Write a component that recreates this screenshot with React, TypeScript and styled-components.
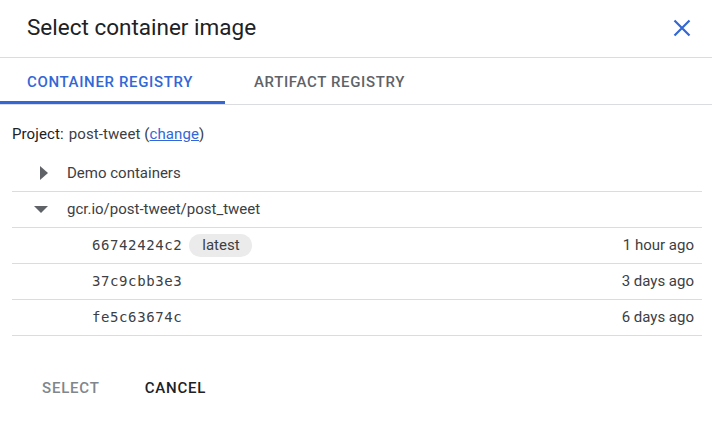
import React from "react";
import styled, { createGlobalStyle } from "styled-components";

const Global = createGlobalStyle`
  html, body { margin: 0; padding: 0; background: #fff; }
  body { font-family: Roboto, "Noto Sans", Arial, sans-serif; color: #202124; }
`;

const Dialog = styled.div`
  width: 712px;
  height: 433px;
  background: #fff;
  display: flex;
  flex-direction: column;
`;

const Header = styled.div`
  height: 58px;
  box-sizing: border-box;
  border-bottom: 1px solid #dadce0;
  display: flex;
  align-items: center;
  justify-content: space-between;
  padding: 0 16px 0 27px;
`;

const Title = styled.h1`
  margin: 0;
  font-size: 22.5px;
  font-weight: 400;
  color: #202124;
  padding-bottom: 4px;
`;

const CloseButton = styled.button`
  border: none;
  background: none;
  padding: 0;
  width: 28px;
  height: 28px;
  display: flex;
  align-items: center;
  justify-content: center;
  cursor: pointer;
  margin-top: -2px;
`;

const Tabs = styled.div`
  height: 47px;
  box-sizing: border-box;
  border-bottom: 1px solid #dadce0;
  display: flex;
`;

const Tab = styled.div<{ $active?: boolean; $width: number; $pad: number }>`
  width: ${(p) => p.$width}px;
  box-sizing: border-box;
  display: flex;
  align-items: center;
  padding-left: ${(p) => p.$pad}px;
  font-size: 15px;
  font-weight: 500;
  letter-spacing: 0.65px;
  text-transform: uppercase;
  color: ${(p) => (p.$active ? "#3367d6" : "#5f6368")};
  border-bottom: 3px solid ${(p) => (p.$active ? "#3367d6" : "transparent")};
  padding-top: 4px;
`;

const Content = styled.div`
  padding: 0 10px 0 12px;
`;

const ProjectLine = styled.div`
  height: 51px;
  display: flex;
  align-items: center;
  font-size: 15px;
  letter-spacing: 0.1px;
  color: #3c4043;
  padding-top: 6px;
  box-sizing: border-box;
`;

const Label = styled.span`
  color: #202124;
  margin-right: 5px;
`;

const Link = styled.a`
  color: #3367d6;
  text-decoration: underline;
`;

const List = styled.div``;

const Row = styled.div<{ $indent: number }>`
  height: 36px;
  box-sizing: border-box;
  display: flex;
  align-items: center;
  padding-left: ${(p) => p.$indent}px;
  padding-right: 8px;
  border-bottom: 1px solid #dadce0;
  font-size: 15px;
  color: #3c4043;
  padding-bottom: 1px;
`;

const Toggle = styled.span<{ $width: number }>`
  width: ${(p) => p.$width}px;
  display: flex;
  align-items: center;
`;

const Hash = styled.span`
  font-family: "DejaVu Sans Mono", "Liberation Mono", monospace;
  font-size: 14px;
  letter-spacing: 0.6px;
  color: #3c4043;
`;

const Chip = styled.span`
  margin-left: 7px;
  height: 23px;
  padding: 0 12px 0 13px;
  border-radius: 12px;
  background: #ebebeb;
  display: inline-flex;
  align-items: center;
  font-size: 15px;
  color: #3c4043;
`;

const Time = styled.span`
  margin-left: auto;
  color: #3c4043;
`;

const Actions = styled.div`
  display: flex;
  padding: 35px 0 0 14px;
`;

const ActionButton = styled.button<{ $disabled?: boolean }>`
  border: none;
  background: none;
  font-family: Roboto, Arial, sans-serif;
  font-size: 15px;
  font-weight: 500;
  letter-spacing: 0.8px;
  text-transform: uppercase;
  color: ${(p) => (p.$disabled ? "#80868b" : "#202124")};
  padding: 8px 16px;
  margin-right: 13px;
  cursor: pointer;
`;

const RightTri = () => (
  <svg width="8" height="14" viewBox="0 0 8 14">
    <path d="M0 0 L8 7 L0 14 Z" fill="#5f6368" />
  </svg>
);

const DownTri = () => (
  <svg width="14" height="7" viewBox="0 0 14 7">
    <path d="M0 0 L14 0 L7 7 Z" fill="#5f6368" />
  </svg>
);

const CloseIcon = () => (
  <svg width="18" height="18" viewBox="0 0 18 18">
    <path d="M1.5 1.5 L16.5 16.5 M16.5 1.5 L1.5 16.5" stroke="#3367d6" strokeWidth="2.2" fill="none" />
  </svg>
);

const versions = [
  { hash: "66742424c2", latest: true, time: "1 hour ago" },
  { hash: "37c9cbb3e3", latest: false, time: "3 days ago" },
  { hash: "fe5c63674c", latest: false, time: "6 days ago" },
];

export default function App() {
  return (
    <Dialog>
      <Global />
      <Header>
        <Title>Select container image</Title>
        <CloseButton aria-label="Close">
          <CloseIcon />
        </CloseButton>
      </Header>
      <Tabs>
        <Tab $active $width={225} $pad={27}>Container Registry</Tab>
        <Tab $width={210} $pad={29}>Artifact Registry</Tab>
      </Tabs>
      <Content>
        <ProjectLine>
          <Label>Project:</Label> post-tweet&nbsp;(<Link>change</Link>)
        </ProjectLine>
        <List>
          <Row $indent={28}>
            <Toggle $width={27}><RightTri /></Toggle>
            Demo containers
          </Row>
          <Row $indent={22}>
            <Toggle $width={33}><DownTri /></Toggle>
            gcr.io/post-tweet/post_tweet
          </Row>
          {versions.map((v) => (
            <Row key={v.hash} $indent={80}>
              <Hash>{v.hash}</Hash>
              {v.latest && <Chip>latest</Chip>}
              <Time>{v.time}</Time>
            </Row>
          ))}
        </List>
        <Actions>
          <ActionButton $disabled>Select</ActionButton>
          <ActionButton>Cancel</ActionButton>
        </Actions>
      </Content>
    </Dialog>
  );
}
